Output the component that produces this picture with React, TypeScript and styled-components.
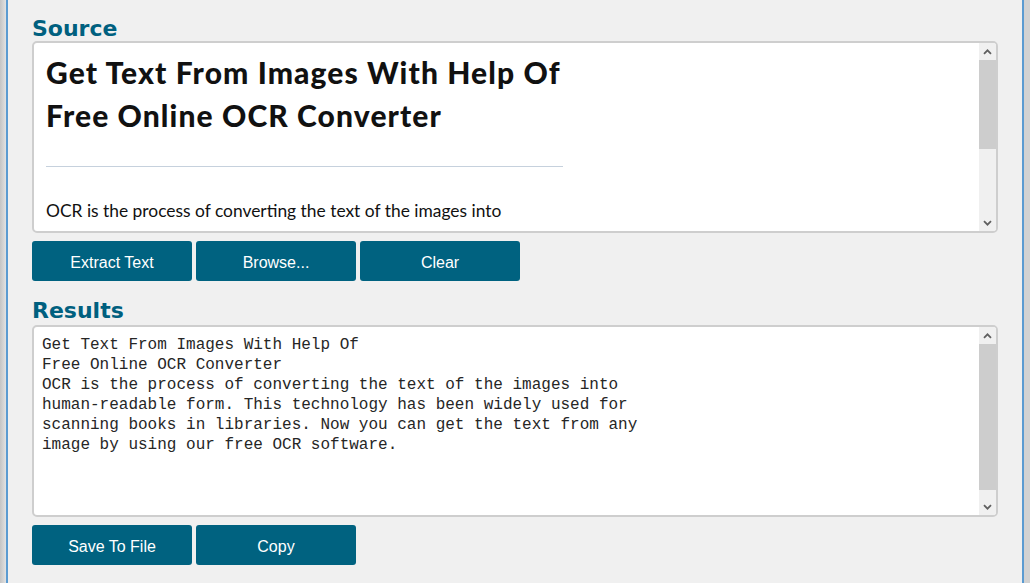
import React from 'react';
import styled, { createGlobalStyle } from 'styled-components';

const GlobalStyle = createGlobalStyle`
	html, body {
		margin: 0;
		padding: 0;
		background: #f0f0f0;
	}
	* {
		box-sizing: border-box;
	}
`;

const resultText = `Get Text From Images With Help Of
Free Online OCR Converter
OCR is the process of converting the text of the images into
human-readable form. This technology has been widely used for
scanning books in libraries. Now you can get the text from any
image by using our free OCR software.`;

const Chevron: React.FC<{ down?: boolean }> = ({ down }) => (
	<svg width="9" height="6" viewBox="0 0 9 6">
		<path
			d={down ? 'M1 1.2 L4.5 4.7 L8 1.2' : 'M1 4.8 L4.5 1.3 L8 4.8'}
			fill="none"
			stroke="#606060"
			strokeWidth="1.8"
		/>
	</svg>
);

const Scrollbar: React.FC<{ thumb: number }> = ({ thumb }) => (
	<Bar>
		<ArrowCell>
			<Chevron />
		</ArrowCell>
		<Track>
			<Thumb style={{ height: thumb }} />
		</Track>
		<ArrowCell>
			<Chevron down />
		</ArrowCell>
	</Bar>
);

const App: React.FC = () => {
	return (
		<Frame>
			<GlobalStyle />
			<LeftEdge />
			<Panel>
				<Label>Source</Label>
				<Box>
					<Editor>
						<Article>
							<Heading>Get Text From Images With Help Of Free Online OCR Converter</Heading>
							<Rule />
							<Para>
								OCR is the process of converting the text of the images into human-readable form.
								This technology has been widely used for scanning books in libraries.
							</Para>
						</Article>
					</Editor>
					<Scrollbar thumb={89} />
				</Box>
				<ButtonRow>
					<Button>Extract Text</Button>
					<Button>Browse...</Button>
					<Button>Clear</Button>
				</ButtonRow>

				<Label $top={18} $bottom={2}>
					Results
				</Label>
				<Box>
					<Output>{resultText}</Output>
					<Scrollbar thumb={146} />
				</Box>
				<ButtonRow>
					<Button>Save To File</Button>
					<Button>Copy</Button>
				</ButtonRow>
			</Panel>
			<RightEdge />
		</Frame>
	);
};

const Frame = styled.div`
	display: flex;
	height: 583px;
	overflow: hidden;
`;

const LeftEdge = styled.div`
	width: 6px;
	background: linear-gradient(to right, #c4c4c4, #e2e2e2);
`;

const RightEdge = styled.div`
	width: 6px;
	background: #d2d2d2;
`;

const Panel = styled.div`
	flex: 1;
	background: #f0f0f0;
	border-left: 2px solid #5b9bd1;
	border-right: 2px solid #5b9bd1;
	padding: 17px 24px 0 24px;
	display: flex;
	flex-direction: column;
`;

const Label = styled.div<{ $top?: number; $bottom?: number }>`
	font-family: 'DejaVu Sans', Verdana, sans-serif;
	font-weight: bold;
	font-size: 22px;
	line-height: 24px;
	color: #00607f;
	margin-top: ${(props) => props.$top || 0}px;
	margin-bottom: ${(props) => props.$bottom || 0}px;
`;

const Box = styled.div`
	display: flex;
	flex-shrink: 0;
	height: 192px;
	background: #fff;
	border: 2px solid #cecece;
	border-radius: 5px;
	overflow: hidden;
`;

const Editor = styled.div`
	flex: 1;
	overflow: hidden;
	padding: 8px 12px 0 12px;
`;

const Article = styled.div`
	width: 517px;
	font-family: Lato, 'Liberation Sans', sans-serif;
	color: #111;
`;

const Heading = styled.h1`
	margin: 0;
	font-size: 30px;
	letter-spacing: 1.1px;
	line-height: 43px;
	font-weight: 900;
`;

const Rule = styled.div`
	height: 1px;
	background: #c6d1dd;
	margin: 29px 0 28px 0;
`;

const Para = styled.p`
	margin: 0;
	font-size: 17.4px;
	line-height: 32px;
`;

const Output = styled.div`
	flex: 1;
	padding: 8px 8px 0 8px;
	font-family: 'Liberation Mono', 'Courier New', monospace;
	font-size: 16px;
	line-height: 20px;
	color: #262626;
	white-space: pre;
	overflow: hidden;
`;

const Bar = styled.div`
	width: 17px;
	display: flex;
	flex-direction: column;
	background: #f0f0f0;
`;

const ArrowCell = styled.div`
	height: 17px;
	display: flex;
	align-items: center;
	justify-content: center;
	background: #f0f0f0;
`;

const Track = styled.div`
	flex: 1;
`;

const Thumb = styled.div`
	background: #cdcdcd;
`;

const ButtonRow = styled.div`
	display: flex;
	gap: 4px;
	margin-top: 8px;
`;

const Button = styled.button`
	width: 160px;
	height: 40px;
	border: none;
	border-radius: 3px;
	background: #006280;
	color: #fff;
	font-family: 'Liberation Sans', Arial, sans-serif;
	font-size: 16px;
	padding: 3px 0 0 0;
	cursor: pointer;
`;

export default App;
